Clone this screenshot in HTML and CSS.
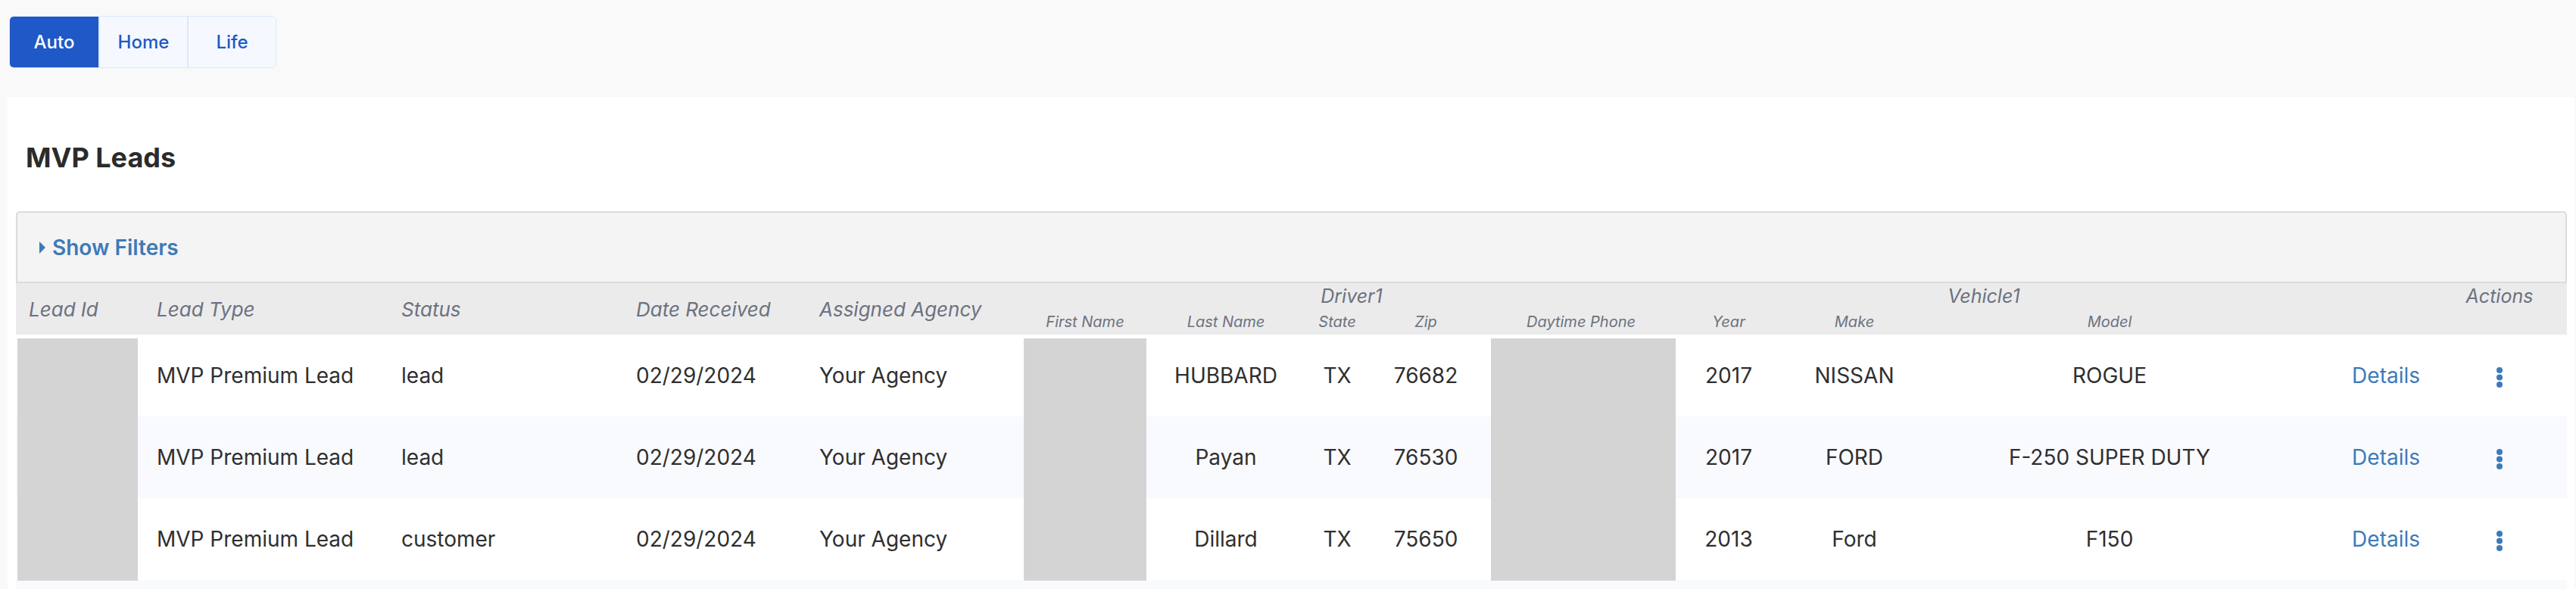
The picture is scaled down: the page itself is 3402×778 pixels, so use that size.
FILE: index.html
```
<!DOCTYPE html>
<html lang="en">
<head>
<meta charset="utf-8">
<title>MVP Leads</title>
<link rel="stylesheet" href="styles.css">
</head>
<body>
<div class="page">
  <div class="tabs">
    <button class="tab active">Auto</button>
    <button class="tab">Home</button>
    <button class="tab">Life</button>
  </div>
  <section class="card">
    <h1 class="title">MVP Leads</h1>
    <div class="panel">
      <div class="filters"><span class="caret"></span><span class="filters-label">Show Filters</span></div>
      <div class="table-wrap">
        <table class="leads">
          <colgroup>
            <col class="w-id"><col class="w-type"><col class="w-status"><col class="w-date"><col class="w-agency">
            <col class="w-first"><col class="w-last"><col class="w-state"><col class="w-zip"><col class="w-phone">
            <col class="w-year"><col class="w-make"><col class="w-model"><col class="w-details"><col class="w-actions">
          </colgroup>
          <thead>
            <tr class="hrow1">
              <th rowspan="2" class="hl">Lead Id</th>
              <th rowspan="2" class="hl">Lead Type</th>
              <th rowspan="2" class="hl">Status</th>
              <th rowspan="2" class="hl">Date Received</th>
              <th rowspan="2" class="hl">Assigned Agency</th>
              <th colspan="5" class="group">Driver1</th>
              <th colspan="3" class="group">Vehicle1</th>
              <th rowspan="2"></th>
              <th class="group">Actions</th>
            </tr>
            <tr class="hrow2">
              <th class="sub">First Name</th>
              <th class="sub">Last Name</th>
              <th class="sub">State</th>
              <th class="sub">Zip</th>
              <th class="sub">Daytime Phone</th>
              <th class="sub">Year</th>
              <th class="sub">Make</th>
              <th class="sub">Model</th>
              <th></th>
            </tr>
          </thead>
          <tbody>
            <tr>
              <td class="l"></td>
              <td class="l">MVP Premium Lead</td>
              <td class="l">lead</td>
              <td class="l">02/29/2024</td>
              <td class="l">Your Agency</td>
              <td class="c"></td>
              <td class="c">HUBBARD</td>
              <td class="c">TX</td>
              <td class="c">76682</td>
              <td class="c"></td>
              <td class="c">2017</td>
              <td class="c">NISSAN</td>
              <td class="c">ROGUE</td>
              <td class="r"><a class="link" href="#">Details</a></td>
              <td class="c"><svg class="kebab" viewBox="0 0 8 27" width="8" height="27"><circle cx="4" cy="4" r="4"/><circle cx="4" cy="13.5" r="4"/><circle cx="4" cy="23" r="4"/></svg></td>
            </tr>
            <tr class="stripe">
              <td class="l"></td>
              <td class="l">MVP Premium Lead</td>
              <td class="l">lead</td>
              <td class="l">02/29/2024</td>
              <td class="l">Your Agency</td>
              <td class="c"></td>
              <td class="c">Payan</td>
              <td class="c">TX</td>
              <td class="c">76530</td>
              <td class="c"></td>
              <td class="c">2017</td>
              <td class="c">FORD</td>
              <td class="c">F-250 SUPER DUTY</td>
              <td class="r"><a class="link" href="#">Details</a></td>
              <td class="c"><svg class="kebab" viewBox="0 0 8 27" width="8" height="27"><circle cx="4" cy="4" r="4"/><circle cx="4" cy="13.5" r="4"/><circle cx="4" cy="23" r="4"/></svg></td>
            </tr>
            <tr>
              <td class="l"></td>
              <td class="l">MVP Premium Lead</td>
              <td class="l">customer</td>
              <td class="l">02/29/2024</td>
              <td class="l">Your Agency</td>
              <td class="c"></td>
              <td class="c">Dillard</td>
              <td class="c">TX</td>
              <td class="c">75650</td>
              <td class="c"></td>
              <td class="c">2013</td>
              <td class="c">Ford</td>
              <td class="c">F150</td>
              <td class="r"><a class="link" href="#">Details</a></td>
              <td class="c"><svg class="kebab" viewBox="0 0 8 27" width="8" height="27"><circle cx="4" cy="4" r="4"/><circle cx="4" cy="13.5" r="4"/><circle cx="4" cy="23" r="4"/></svg></td>
            </tr>
            <tr class="stripe">
              <td colspan="15"></td>
            </tr>
          </tbody>
        </table>
        <div class="redact r-id"></div>
        <div class="redact r-first"></div>
        <div class="redact r-phone"></div>
      </div>
    </div>
  </section>
</div>
</body>
</html>
```
FILE: styles.css
```
html, body {
  margin: 0;
  padding: 0;
  overflow: hidden;
}
body {
  background: #f9f9fa;
  font-family: Inter, "Noto Sans", "Liberation Sans", sans-serif;
  color: #2f2f2f;
}
.page {
  display: flex;
  flex-direction: column;
}
.tabs {
  display: flex;
  align-self: flex-start;
  margin: 21px 0 0 12px;
  border: 1px solid #dce7fb;
  border-radius: 6px;
  overflow: hidden;
}
.tab {
  width: 117px;
  height: 67px;
  box-sizing: border-box;
  border: 0;
  margin: 0;
  padding: 0;
  background: #f5f8ff;
  color: #1f58c7;
  font-family: Inter, "Noto Sans", sans-serif;
  font-size: 24px;
  font-weight: 500;
  cursor: pointer;
}
.tab + .tab {
  border-left: 2px solid #dce7fb;
}
.tab.active {
  background: #1f58c7;
  color: #ffffff;
}
.card {
  background: #ffffff;
  margin: 38px 2px 0 10px;
  padding: 0 10px 0 11px;
  min-height: 700px;
}
.title {
  margin: 58px 0 0 13px;
  font-size: 36px;
  line-height: 44px;
  font-weight: 700;
  color: #2b2b2b;
}
.panel {
  margin-top: 49px;
}
.filters {
  box-sizing: border-box;
  height: 95px;
  display: flex;
  align-items: center;
  gap: 9px;
  padding-left: 29px;
  background: #f4f4f4;
  border: 2px solid #dcdcdc;
  border-radius: 5px 5px 0 0;
}
.caret {
  width: 0;
  height: 0;
  border-left: 8px solid #3d7ab8;
  border-top: 8px solid transparent;
  border-bottom: 8px solid transparent;
}
.filters-label {
  font-size: 28px;
  font-weight: 600;
  color: #3d7ab8;
}
.table-wrap {
  position: relative;
}
.leads {
  width: 100%;
  table-layout: fixed;
  border-collapse: collapse;
}
.w-id { width: 169px; }
.w-type { width: 323px; }
.w-status { width: 310px; }
.w-date { width: 242px; }
.w-agency { width: 280px; }
.w-first { width: 176px; }
.w-last { width: 196px; }
.w-state { width: 98px; }
.w-zip { width: 136px; }
.w-phone { width: 274px; }
.w-year { width: 116px; }
.w-make { width: 216px; }
.w-model { width: 458px; }
.w-details { width: 197px; }
.w-actions { width: 178px; }
.leads thead th {
  background: #ebebeb;
  color: #6b7280;
  font-style: italic;
  font-weight: 400;
  font-size: 26px;
  padding: 0;
  white-space: nowrap;
}
.hrow1 th, .hrow2 th {
  height: 34px;
}
.leads th.hl {
  text-align: left;
  vertical-align: middle;
  padding-left: 17px;
}
.leads th.group {
  text-align: center;
  vertical-align: middle;
  font-size: 25px;
}
.leads th.sub {
  text-align: center;
  vertical-align: middle;
  font-size: 20px;
}
.leads tbody td {
  height: 108px;
  padding: 0;
  font-size: 28px;
  color: #2f2f2f;
  vertical-align: middle;
  white-space: nowrap;
}
.leads tbody tr.stripe td {
  background: #f9fafd;
}
.leads td.l {
  text-align: left;
  padding-left: 17px;
}
.leads td.c {
  text-align: center;
}
.leads td.r {
  text-align: right;
  padding-right: 16px;
}
.link {
  color: #3d7ab8;
  text-decoration: none;
}
.kebab {
  display: inline-block;
  vertical-align: middle;
  fill: #3d7ab8;
}
.redact {
  position: absolute;
  top: 73px;
  height: 320px;
  background: #d4d4d4;
}
.r-id { left: 2px; width: 159px; }
.r-first { left: 1331px; width: 162px; }
.r-phone { left: 1948px; width: 244px; }
```
